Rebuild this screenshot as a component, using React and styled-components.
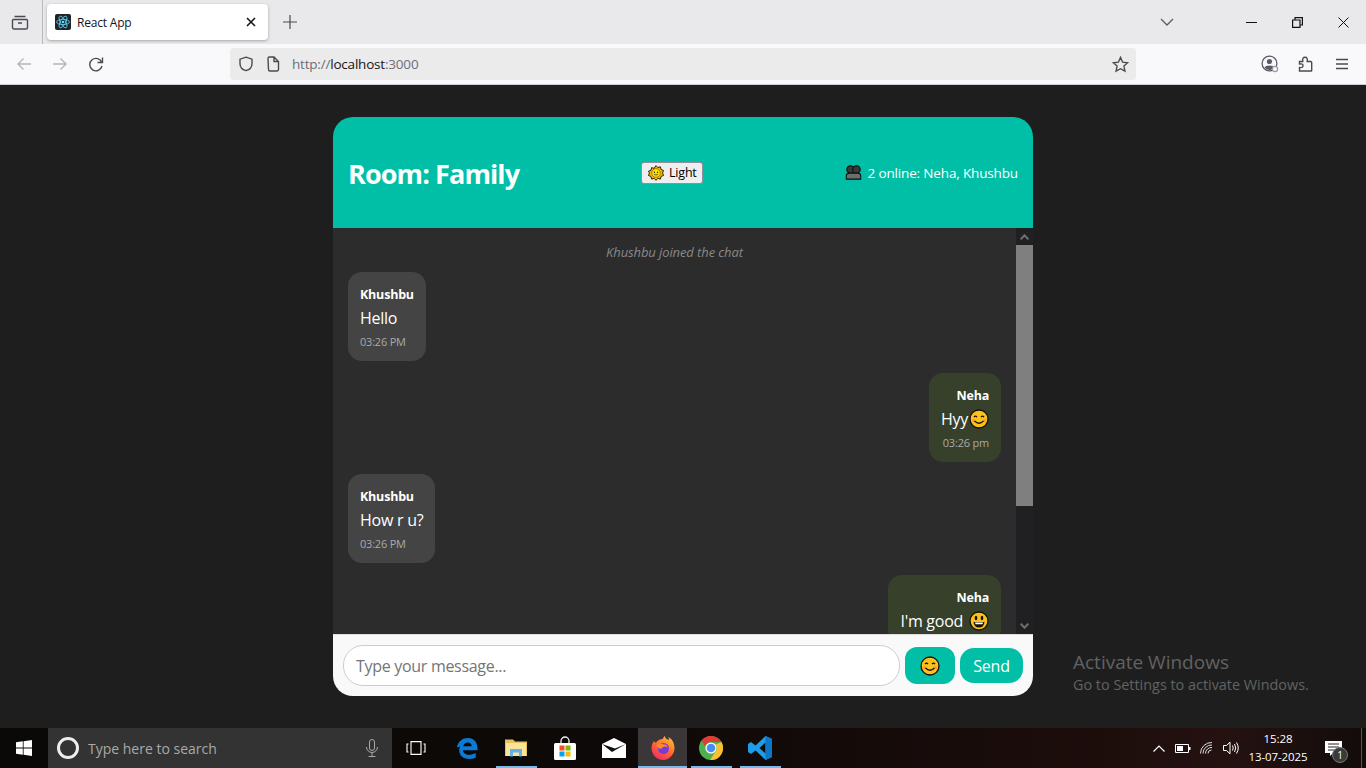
import styled, { createGlobalStyle } from "styled-components";

const UI_FONT = `"Open Sans", "Noto Sans", "Liberation Sans", sans-serif`;
const TEAL = "#00bfa6";

const messages = [
  { id: 1, sender: "Khushbu", text: "Hello", time: "03:26 PM" },
  { id: 2, sender: "Neha", text: "Hyy", emoji: "smile", time: "03:26 pm", own: true },
  { id: 3, sender: "Khushbu", text: "How r u?", time: "03:26 PM" },
  { id: 4, sender: "Neha", text: "I'm good ", emoji: "grin", own: true },
];

const SmileEmoji = ({ size = 20 }) => (
  <svg width={size} height={size} viewBox="0 0 20 20">
    <circle cx="10" cy="10" r="9" fill="#fcc21b" stroke="#1a1208" strokeWidth="1.3" />
    <path d="M5 8.2q1.5-2 3 0M12 8.2q1.5-2 3 0" fill="none" stroke="#1a1208" strokeWidth="1.2" />
    <circle cx="4.6" cy="11.6" r="1.6" fill="#f59a3c" />
    <circle cx="15.4" cy="11.6" r="1.6" fill="#f59a3c" />
    <path d="M5.5 12q4.5 4.5 9 0" fill="none" stroke="#1a1208" strokeWidth="1.2" />
  </svg>
);

const GrinEmoji = ({ size = 20 }) => (
  <svg width={size} height={size} viewBox="0 0 20 20">
    <circle cx="10" cy="10" r="9" fill="#fcc21b" stroke="#1a1208" strokeWidth="1.3" />
    <ellipse cx="7" cy="7" rx="1.3" ry="2.2" fill="#1a1208" />
    <ellipse cx="13" cy="7" rx="1.3" ry="2.2" fill="#1a1208" />
    <path d="M4.5 11h11q-.6 5.5-5.5 5.5T4.500 11z" fill="#1a1208" />
    <path d="M6 11.500h8q-.2 1.500-.8 1.800H6.800q-.6-.4-.8-1.800z" fill="#fff" />
  </svg>
);

const SunEmoji = () => (
  <svg width="16" height="16" viewBox="0 0 20 20">
    <path
      d="M10 .8l2.300 2.400 3.200-.9.800 3.300 3.100 1.200-1.200 3.200 1.200 3.100-3.100 1.200-.8 3.300-3.200-.9L10 19.200l-2.300-2.500-3.200.9-.8-3.300-3.100-1.200 1.200-3.100L.6 7.800l3.100-1.200.8-3.300 3.200.9z"
      fill="#ffb900"
      stroke="#231a05"
      strokeWidth="1.200"
    />
    <circle cx="10" cy="10" r="5.400" fill="#ffe600" stroke="#6b4e00" strokeWidth=".8" />
    <circle cx="8" cy="9" r=".9" fill="#222" />
    <circle cx="12" cy="9" r=".9" fill="#222" />
    <path d="M7.500 11.500q2.500 2.200 5 0" fill="none" stroke="#222" strokeWidth=".9" />
  </svg>
);

const PeopleEmoji = () => (
  <svg width="17" height="15" viewBox="0 0 20 17">
    <circle cx="6.500" cy="5" r="4.400" fill="#3a3a3a" stroke="#0c0c0c" strokeWidth="1.200" />
    <circle cx="13.500" cy="5" r="4.400" fill="#3a3a3a" stroke="#0c0c0c" strokeWidth="1.200" />
    <path d="M1.500 16.300v-4Q1.500 9.500 5 9.500h10q3.500 0 3.500 2.800v4z" fill="#6d6d6d" stroke="#0c0c0c" strokeWidth="1.200" />
  </svg>
);

const Stroke = ({ size = 16, w = 16, h = 16, color = "#5b5b66", width = 1.4, children }) => (
  <svg width={size} height={(size * h) / w} viewBox={`0 0 ${w} ${h}`} fill="none" stroke={color} strokeWidth={width}>
    {children}
  </svg>
);

const ReactFavicon = () => (
  <svg width="16" height="16" viewBox="0 0 16 16">
    <rect width="16" height="16" rx="2" fill="#20232a" />
    <g fill="none" stroke="#61dafb" strokeWidth=".8">
      <ellipse cx="8" cy="8" rx="6.500" ry="2.600" />
      <ellipse cx="8" cy="8" rx="6.500" ry="2.600" transform="rotate(60 8 8)" />
      <ellipse cx="8" cy="8" rx="6.500" ry="2.600" transform="rotate(120 8 8)" />
    </g>
    <circle cx="8" cy="8" r="1.300" fill="#61dafb" />
  </svg>
);

const WindowsLogo = () => (
  <svg width="16" height="16" viewBox="0 0 16 16" fill="#fff">
    <path d="M0 2.300l6.800-1v6.300H0zM7.600 1.200L16 0v7.600H7.600zM0 8.400h6.800v6.300L0 13.700zM7.600 8.400H16V16l-8.400-1.200z" />
  </svg>
);

const EdgeIcon = () => (
  <svg width="22" height="24" viewBox="0 0 24 24">
    <path
      d="M1 11.500C2 4.500 7.500 1 13 1c6.500 0 10.500 5 10.500 11.500v2H7.500c.3 5 7.500 6.500 14 3v5c-8 3.500-18 1-18-8 0-3 1.500-5.500 4-7C5.500 9 5 10 4.600 10.500 3.500 10.500 2 11 1 11.500zM7.800 10h9.400c0-5.500-8.500-5.500-9.400 0z"
      fill="#0a7ad6"
    />
  </svg>
);

const ExplorerIcon = () => (
  <svg width="22" height="20" viewBox="0 0 22 20">
    <path d="M0 1.500h8l2 2h12V18H0z" fill="#e6c15c" />
    <path d="M1 5h20v13H1z" fill="#fbe39a" />
    <path d="M5 11h12v7.500h-3v-4H8v4H5z" fill="#5fb3e8" />
  </svg>
);

const StoreIcon = () => (
  <svg width="24" height="24" viewBox="0 0 24 24">
    <path d="M8 7V5a4 4 0 0 1 8 0v2" fill="none" stroke="#eee" strokeWidth="1.300" />
    <rect x="1" y="7" width="22" height="17" rx="1.500" fill="#fff" />
    <rect x="6.500" y="9.500" width="5" height="5" fill="#f25022" />
    <rect x="12.500" y="9.500" width="5" height="5" fill="#7fba00" />
    <rect x="6.500" y="15.500" width="5" height="5" fill="#00a4ef" />
    <rect x="12.500" y="15.500" width="5" height="5" fill="#ffb900" />
  </svg>
);

const MailIcon = () => (
  <svg width="24" height="20" viewBox="0 0 24 20">
    <path d="M0 6L12 0l12 6v14H0z" fill="#fff" />
    <path d="M0 6l10 8 14-8-11 4.500z" fill="#111" />
  </svg>
);

const FirefoxIcon = () => (
  <svg width="24" height="24" viewBox="0 0 24 24">
    <defs>
      <linearGradient id="foxBody" x1="0.800" y1="0" x2="0.200" y2="1">
        <stop offset="0" stopColor="#ffc22e" />
        <stop offset=".5" stopColor="#ff6a2b" />
        <stop offset="1" stopColor="#f0246e" />
      </linearGradient>
    </defs>
    <path
      d="M3 5c.5 1 1 1.600 1.800 1.800C6.500 4.500 9 3 12 3c0-1 .5-2 2-3 0 2.500 1.500 3 3.500 4 1 0 .5-2-.5-3 4 1.500 6.500 6 6.500 11 0 6-5 12-11.500 12C5.500 24 .5 18.500.5 12c0-2.500 1-5 2.500-7z"
      fill="url(#foxBody)"
    />
    <circle cx="12.500" cy="12.500" r="5.500" fill="#7b3bd0" />
    <path d="M5 9.500c3-2 6-2.500 8-1 2-.5 3.500 1 3.500 3-1.500-1.500-3.500-1.500-5 0-1 1.500-3 1.500-4 .5z" fill="#ff8a2b" />
  </svg>
);

const ChromeIcon = () => (
  <svg width="24" height="24" viewBox="0 0 24 24">
    <circle cx="12" cy="12" r="12" fill="#4caf50" />
    <path d="M12 0a12 12 0 0 1 10.400 6H12a6 6 0 0 0-5.800 4.500L2.700 4.500A12 12 0 0 1 12 0z" fill="#e53935" />
    <path d="M22.400 6A12 12 0 0 1 11 24l5.200-8a6 6 0 0 0 .5-7.500z" fill="#fbc02d" />
    <circle cx="12" cy="12" r="5.600" fill="#fff" />
    <circle cx="12" cy="12" r="4.300" fill="#4a8af4" />
  </svg>
);

const VsCodeIcon = () => (
  <svg width="24" height="24" viewBox="0 0 24 24">
    <path d="M17.500 0L24 3v18l-6.500 3-10-9.500-4.500 3.500L0 16V8l3-2 4.500 3.500zM17.500 6.500L11.500 12l6 5.500z" fill="#1f9be8" />
    <path d="M17.500 0L24 3v18l-6.500 3z" fill="#0a78c8" />
  </svg>
);

const App = () => (
  <>
    <GlobalStyle />
    <Screen>
      <TabStrip>
        <TabsMenu>
          <Stroke size={18} w={18} h={18} color="#4a4a52">
            <path d="M3.500 3.500h11M2.500 6.500h13a1 1 0 0 1 1 1v7a1.500 1.500 0 0 1-1.500 1.500H3a1.500 1.500 0 0 1-1.500-1.500v-7a1 1 0 0 1 1-1zM7 10h4" />
          </Stroke>
        </TabsMenu>
        <Tab>
          <ReactFavicon />
          <TabTitle>React App</TabTitle>
          <Stroke size={10} w={10} h={10} color="#15141a" width={1.600}>
            <path d="M1 1l8 8M9 1l-8 8" />
          </Stroke>
        </Tab>
        <NewTab>
          <Stroke size={14} w={14} h={14} color="#4a4a52" width={1.200}>
            <path d="M7 0v14M0 7h14" />
          </Stroke>
        </NewTab>
        <WindowControls>
          <ListTabs>
            <Stroke size={14} w={14} h={8} color="#5b5b66" width={1.300}>
              <path d="M1 1l6 6 6-6" />
            </Stroke>
          </ListTabs>
          <WindowButton>
            <Stroke size={11} w={11} h={1} color="#111" width={2}>
              <path d="M0 .5h11" />
            </Stroke>
          </WindowButton>
          <WindowButton>
            <Stroke size={11} w={11} h={11} color="#111" width={1.200}>
              <path d="M.6 3h7.400v7.400H.6zM3 3V.6h7.400V8H8" />
            </Stroke>
          </WindowButton>
          <WindowButton>
            <Stroke size={11} w={11} h={11} color="#111" width={1}>
              <path d="M.5.500l10 10M10.500.500l-10 10" />
            </Stroke>
          </WindowButton>
        </WindowControls>
      </TabStrip>

      <Toolbar>
        <NavButton>
          <Stroke size={16} color="#b4b4bb">
            <path d="M15 8H2M7.500 2.500L2 8l5.500 5.500" />
          </Stroke>
        </NavButton>
        <NavButton>
          <Stroke size={16} color="#b4b4bb">
            <path d="M1 8h13M8.500 2.500L14 8l-5.500 5.500" />
          </Stroke>
        </NavButton>
        <NavButton>
          <Stroke size={16} color="#4a4a52">
            <path d="M13.800 6.500A6.200 6.200 0 1 0 14 10M14.500 1.500v5h-5" />
          </Stroke>
        </NavButton>
        <UrlBar>
          <Stroke size={16} color="#4a4a52">
            <path d="M8 1.200l6 2v4.500c0 3.500-2.500 6-6 7-3.500-1-6-3.500-6-7V3.200z" />
          </Stroke>
          <Stroke size={14} w={14} h={16} color="#4a4a52">
            <path d="M2 2.500a1.500 1.500 0 0 1 1.500-1.500h4.500l4.500 4.500v8a1.500 1.500 0 0 1-1.500 1.500h-7a1.500 1.500 0 0 1-1.500-1.500zM8 1v4.500h4.500" />
          </Stroke>
          <UrlText>
            http://<b>localhost</b>:3000
          </UrlText>
          <Star>
            <Stroke size={17} color="#4a4a52" width={1.300}>
              <path d="M8 1.300l2 4.500 4.800.5-3.600 3.200 1 4.800L8 12l-4.200 2.300 1-4.800L1.200 6.300 6 5.800z" />
            </Stroke>
          </Star>
        </UrlBar>
        <ToolSlot>
          <svg width="18" height="18" viewBox="0 0 18 18">
            <circle cx="8.500" cy="8.500" r="7.400" fill="none" stroke="#5b5b66" strokeWidth="1.300" />
            <circle cx="8.500" cy="6.500" r="2.600" fill="#5b5b66" />
            <path d="M3.500 12.500q1-2 5-2t5 2q-2 2.500-5 2.500t-5-2.500z" fill="#5b5b66" />
            <circle cx="14" cy="14" r="2.600" fill="#f9f9fb" stroke="#9a9aa3" strokeWidth="1.200" />
          </svg>
        </ToolSlot>
        <ToolSlot>
          <Stroke size={16} color="#4a4a52">
            <path d="M1.500 5.500h3.300c-.6-3 .4-4.300 2.200-4.300s2.800 1.300 2.200 4.300h3.500a1 1 0 0 1 1 1v8a.5.5 0 0 1-.5.500H1.500v-3.500c2.600.5 3.500-.5 3.500-1.800S4.100 7.500 1.500 8z" />
          </Stroke>
        </ToolSlot>
        <ToolSlot>
          <Stroke size={14} w={14} h={12} color="#4a4a52" width={1.300}>
            <path d="M1 1.500h12M1 6h12M1 10.500h12" />
          </Stroke>
        </ToolSlot>
      </Toolbar>

      <Page>
        <ChatCard>
          <ChatHeader>
            <RoomTitle>Room: Family</RoomTitle>
            <ThemeToggle>
              <SunEmoji /> Light
            </ThemeToggle>
            <Online>
              <PeopleEmoji /> 2 online: Neha, Khushbu
            </Online>
          </ChatHeader>
          <ChatBody>
            <MessageList>
              <SystemNote>Khushbu joined the chat</SystemNote>
              {messages.map((m) => (
                <Bubble key={m.id} $own={m.own}>
                  <Sender>{m.sender}</Sender>
                  <BubbleText $gap={m.emoji === "grin"}>
                    {m.text}
                    {m.emoji === "smile" && <SmileEmoji />}
                    {m.emoji === "grin" && <GrinEmoji />}
                  </BubbleText>
                  {m.time && <Time>{m.time}</Time>}
                </Bubble>
              ))}
            </MessageList>
            <ScrollTrack>
              <ScrollArrow>
                <svg width="9" height="6" viewBox="0 0 9 6" fill="none" stroke="#6e6e73" strokeWidth="2">
                  <path d="M.7 5.300l3.800-4 3.800 4" />
                </svg>
              </ScrollArrow>
              <ScrollThumb />
              <ScrollRest />
              <ScrollArrow>
                <svg width="9" height="6" viewBox="0 0 9 6" fill="none" stroke="#6e6e73" strokeWidth="2">
                  <path d="M.7.700l3.800 4 3.800-4" />
                </svg>
              </ScrollArrow>
            </ScrollTrack>
          </ChatBody>
          <Composer>
            <MessageInput placeholder="Type your message..." readOnly />
            <EmojiButton>
              <SmileEmoji />
            </EmojiButton>
            <SendButton>Send</SendButton>
          </Composer>
        </ChatCard>
        <Watermark>
          <WatermarkTitle>Activate Windows</WatermarkTitle>
          <WatermarkHint>Go to Settings to activate Windows.</WatermarkHint>
        </Watermark>
      </Page>

      <Taskbar>
        <StartButton>
          <WindowsLogo />
        </StartButton>
        <SearchBox>
          <CortanaRing />
          <SearchHint>Type here to search</SearchHint>
          <Stroke size={14} w={14} h={18} color="#a9a9a9" width={1}>
            <path d="M4.500 3a2.500 2.500 0 0 1 5 0v6a2.500 2.500 0 0 1-5 0zM1.500 8a5.500 5.500 0 0 0 11 0M7 14v3.500M3.500 17.500h7" />
          </Stroke>
        </SearchBox>
        <TaskView>
          <Stroke size={20} w={20} h={14} color="#fff" width={1.100}>
            <path d="M5 .6h10v12.800H5zM2.500 3H1v8h1.500M17.500 3H19v8h-1.500" />
          </Stroke>
        </TaskView>
        <AppSlot>
          <EdgeIcon />
        </AppSlot>
        <AppSlot $running>
          <ExplorerIcon />
        </AppSlot>
        <AppSlot>
          <StoreIcon />
        </AppSlot>
        <AppSlot>
          <MailIcon />
        </AppSlot>
        <AppSlot $running $active>
          <FirefoxIcon />
        </AppSlot>
        <AppSlot $running>
          <ChromeIcon />
        </AppSlot>
        <AppSlot $running>
          <VsCodeIcon />
        </AppSlot>
        <Tray>
          <TraySlot>
            <Stroke size={12} w={12} h={7} color="#fff" width={1.200}>
              <path d="M.5 6.500L6 1l5.500 5.500" />
            </Stroke>
          </TraySlot>
          <TraySlot>
            <svg width="16" height="9" viewBox="0 0 16 9">
              <path d="M.5.500h13v8H.5z" fill="none" stroke="#fff" />
              <rect x="2" y="2" width="6" height="5" fill="#fff" />
              <rect x="14" y="3" width="1.500" height="3" fill="#fff" />
            </svg>
          </TraySlot>
          <TraySlot>
            <Stroke size={14} w={14} h={12} color="#ddd" width={1}>
              <path d="M.5 11.500A11 11 0 0 1 12 .500M3 11.500A8.500 8.500 0 0 1 12 3M5.500 11.500A6 6 0 0 1 12 5.500M8 11.500A3.500 3.500 0 0 1 11.500 8" />
            </Stroke>
          </TraySlot>
          <TraySlot>
            <Stroke size={16} w={16} h={14} color="#fff" width={1}>
              <path d="M.5 4.500h3L7 1.200v11.600L3.500 9.500h-3zM9.500 4.500q1.500 2.500 0 5M11.500 3q2.500 4 0 8M13.500 1.500q3.500 5.500 0 11" />
            </Stroke>
          </TraySlot>
          <Clock>
            <span>15:28</span>
            <span>13-07-2025</span>
          </Clock>
          <Notifications>
            <svg width="17" height="15" viewBox="0 0 17 15">
              <path d="M0 0h17v12H8l-3 3v-3H0z" fill="#fff" />
              <path d="M3 3h11M3 6h11M3 9h11" stroke="#222" />
            </svg>
            <NotificationBadge>1</NotificationBadge>
          </Notifications>
          <ShowDesktop />
        </Tray>
      </Taskbar>
    </Screen>
  </>
);

const GlobalStyle = createGlobalStyle`
  html, body { margin: 0; padding: 0; height: 100%; overflow: hidden; }
  body { font-family: ${UI_FONT}; background: #1e1e1e; }
  * { box-sizing: border-box; }
`;

const Screen = styled.div`
  width: 1366px;
  height: 768px;
  display: flex;
  flex-direction: column;
  overflow: hidden;
`;

const TabStrip = styled.div`
  height: 44px;
  flex: none;
  background: #e9e9eb;
  display: flex;
  align-items: center;
`;
const TabsMenu = styled.div`
  width: 43px;
  height: 44px;
  flex: none;
  padding-left: 11px;
  padding-right: 3px;
  border-right: 1px solid #b9b9bd;
  display: flex;
  align-items: center;
`;
const Tab = styled.div`
  width: 221px;
  height: 36px;
  flex: none;
  margin-left: 4px;
  padding: 0 12px 0 8px;
  background: #fff;
  border-radius: 4px;
  box-shadow: 0 1px 3px rgba(0, 0, 0, 0.3);
  display: flex;
  align-items: center;
`;
const TabTitle = styled.span`
  flex: 1;
  margin-left: 6px;
  font-size: 12px;
  letter-spacing: -0.2px;
  color: #15141a;
`;
const NewTab = styled.div`
  margin-left: 15px;
  display: flex;
`;
const WindowControls = styled.div`
  margin-left: auto;
  display: flex;
  align-items: center;
`;
const ListTabs = styled.div`
  width: 46px;
  margin-right: 38px;
  display: flex;
  justify-content: center;
`;
const WindowButton = styled.div`
  width: 46px;
  display: flex;
  justify-content: center;
`;

const Toolbar = styled.div`
  height: 41px;
  flex: none;
  background: #f9f9fb;
  border-bottom: 1px solid #cfcfd8;
  padding: 0 6px;
  display: flex;
  align-items: center;
`;
const NavButton = styled.div`
  width: 36px;
  display: flex;
  justify-content: center;
`;
const UrlBar = styled.div`
  width: 906px;
  height: 32px;
  margin: 0 116px 0 116px;
  padding: 0 7px 0 8px;
  background: #ebebeb;
  border-radius: 4px;
  display: flex;
  align-items: center;
  gap: 12px;
`;
const UrlText = styled.span`
  flex: 1;
  font-size: 13.5px;
  letter-spacing: -0.2px;
  color: #6e6e76;
  b {
    font-weight: 400;
    color: #15141a;
  }
`;
const Star = styled.div`
  display: flex;
`;
const ToolSlot = styled.div`
  width: 36px;
  display: flex;
  justify-content: center;
`;

const Page = styled.div`
  flex: 1;
  min-height: 0;
  background: #1e1e1e;
  padding-top: 32px;
  position: relative;
  display: flex;
  justify-content: center;
`;
const ChatCard = styled.div`
  width: 700px;
  height: 579px;
  border-radius: 20px;
  overflow: hidden;
  display: flex;
  flex-direction: column;
`;
const ChatHeader = styled.div`
  height: 111px;
  flex: none;
  background: ${TEAL};
  padding: 0 15px;
  display: flex;
  align-items: center;
  justify-content: space-between;
  color: #fff;
`;
const RoomTitle = styled.h2`
  margin: 2px 0 0;
  font-size: 27px;
  line-height: 36px;
  letter-spacing: -0.9px;
  font-weight: 700;
`;
const ThemeToggle = styled.button`
  height: 22px;
  margin-right: 21px;
  padding: 0 5px 0 6px;
  background: #efefef;
  border: 1px solid #8f8f9d;
  border-radius: 3px;
  color: #000;
  font-family: ${UI_FONT};
  font-size: 12.5px;
  letter-spacing: -0.2px;
  display: flex;
  align-items: center;
  gap: 5px;
`;
const Online = styled.div`
  font-size: 13.5px;
  letter-spacing: -0.15px;
  display: flex;
  align-items: center;
  gap: 5px;
`;

const ChatBody = styled.div`
  height: 406px;
  flex: none;
  background: #2c2c2c;
  display: flex;
`;
const MessageList = styled.div`
  flex: 1;
  min-width: 0;
  overflow: hidden;
  padding: 16px 15px 0;
  display: flex;
  flex-direction: column;
  gap: 12px;
`;
const SystemNote = styled.div`
  flex: none;
  height: 17px;
  margin-bottom: -1px;
  text-align: center;
  font-size: 13px;
  line-height: 17px;
  letter-spacing: -0.1px;
  font-style: italic;
  color: #888;
`;
const Bubble = styled.div`
  flex: none;
  align-self: ${(p) => (p.$own ? "flex-end" : "flex-start")};
  padding: 13px 12px 11px;
  border-radius: 14px;
  background: ${(p) => (p.$own ? "#36402b" : "#444")};
  color: #fff;
  text-align: ${(p) => (p.$own ? "right" : "left")};
`;
const Sender = styled.div`
  font-size: 12.5px;
  line-height: 20px;
  letter-spacing: -0.2px;
  font-weight: 700;
  margin-bottom: 2px;
`;
const BubbleText = styled.div`
  font-size: 16px;
  line-height: 22px;
  letter-spacing: -0.25px;
  display: flex;
  align-items: center;
  white-space: pre;
  gap: ${(p) => (p.$gap ? "2px" : "1px")};
`;
const Time = styled.div`
  margin-top: 5px;
  font-size: 11px;
  line-height: 16px;
  letter-spacing: -0.2px;
  color: #aaa;
`;

const ScrollTrack = styled.div`
  width: 17px;
  flex: none;
  background: #202023;
  display: flex;
  flex-direction: column;
`;
const ScrollArrow = styled.div`
  height: 17px;
  flex: none;
  display: flex;
  align-items: center;
  justify-content: center;
`;
const ScrollThumb = styled.div`
  height: 261px;
  flex: none;
  background: #7f7f7f;
`;
const ScrollRest = styled.div`
  flex: 1;
`;

const Composer = styled.div`
  flex: 1;
  background: #f9f9f9;
  border-top: 1px solid #ddd;
  padding: 0 10px;
  display: flex;
  align-items: center;
`;
const MessageInput = styled.input`
  width: 557px;
  height: 41px;
  flex: none;
  padding: 0 12px;
  border: 1px solid #ccc;
  border-radius: 20px;
  background: #fff;
  outline: none;
  font-family: ${UI_FONT};
  font-size: 16px;
  letter-spacing: -0.3px;
  &::placeholder {
    color: #757575;
    opacity: 1;
  }
`;
const EmojiButton = styled.div`
  width: 50px;
  height: 37px;
  margin-left: 5px;
  background: ${TEAL};
  border-radius: 12px;
  display: flex;
  align-items: center;
  justify-content: center;
`;
const SendButton = styled.div`
  width: 63px;
  height: 35px;
  margin-left: 5px;
  background: ${TEAL};
  border-radius: 14px;
  color: #fff;
  font-size: 16px;
  letter-spacing: -0.2px;
  display: flex;
  align-items: center;
  justify-content: center;
`;

const Watermark = styled.div`
  position: absolute;
  left: 1073px;
  top: 565px;
  color: #626262;
`;
const WatermarkTitle = styled.div`
  font-size: 19px;
  line-height: 25px;
`;
const WatermarkHint = styled.div`
  font-size: 14.4px;
  line-height: 20px;
`;

const Taskbar = styled.div`
  height: 40px;
  flex: none;
  background: linear-gradient(90deg, #0b0907 0%, #0d0908 45%, #1c0d0b 80%, #241211 90%, #120c0b 100%);
  display: flex;
  align-items: stretch;
`;
const StartButton = styled.div`
  width: 48px;
  flex: none;
  display: flex;
  align-items: center;
  justify-content: center;
`;
const SearchBox = styled.div`
  width: 344px;
  flex: none;
  padding: 0 13px 0 9px;
  background: #333;
  display: flex;
  align-items: center;
`;
const CortanaRing = styled.div`
  width: 22px;
  height: 22px;
  border-radius: 50%;
  border: 3px solid #eee;
`;
const SearchHint = styled.span`
  flex: 1;
  margin-left: 9px;
  font-size: 14px;
  color: #a9a9a9;
`;
const TaskView = styled.div`
  width: 51px;
  flex: none;
  padding-right: 3px;
  display: flex;
  align-items: center;
  justify-content: center;
`;
const AppSlot = styled.div`
  width: 48.800px;
  flex: none;
  position: relative;
  display: flex;
  align-items: center;
  justify-content: center;
  background: ${(p) => (p.$active ? "#3b3638" : "transparent")};
  &::after {
    content: "";
    position: absolute;
    left: ${(p) => (p.$active ? "0" : "4px")};
    right: ${(p) => (p.$active ? "0" : "4px")};
    bottom: 0;
    height: 2px;
    background: ${(p) => (p.$running ? "#76b9ed" : "transparent")};
  }
`;
const Tray = styled.div`
  margin-left: auto;
  display: flex;
  align-items: center;
`;
const TraySlot = styled.div`
  width: 24px;
  display: flex;
  justify-content: center;
`;
const Clock = styled.div`
  width: 70px;
  color: #fff;
  font-size: 11.500px;
  line-height: 18px;
  letter-spacing: -0.1px;
  white-space: nowrap;
  display: flex;
  flex-direction: column;
  align-items: center;
`;
const Notifications = styled.div`
  width: 32px;
  margin-left: 4px;
  display: flex;
  justify-content: center;
  position: relative;
`;
const NotificationBadge = styled.span`
  position: absolute;
  left: 15px;
  top: 6px;
  width: 16px;
  height: 16px;
  border-radius: 50%;
  background: #3a3a3a;
  border: 1px solid #777;
  color: #fff;
  font-size: 10px;
  line-height: 14px;
  text-align: center;
`;
const ShowDesktop = styled.div`
  width: 5px;
  height: 40px;
  margin-left: 12px;
  border-left: 1px solid #555;
`;

export default App;
